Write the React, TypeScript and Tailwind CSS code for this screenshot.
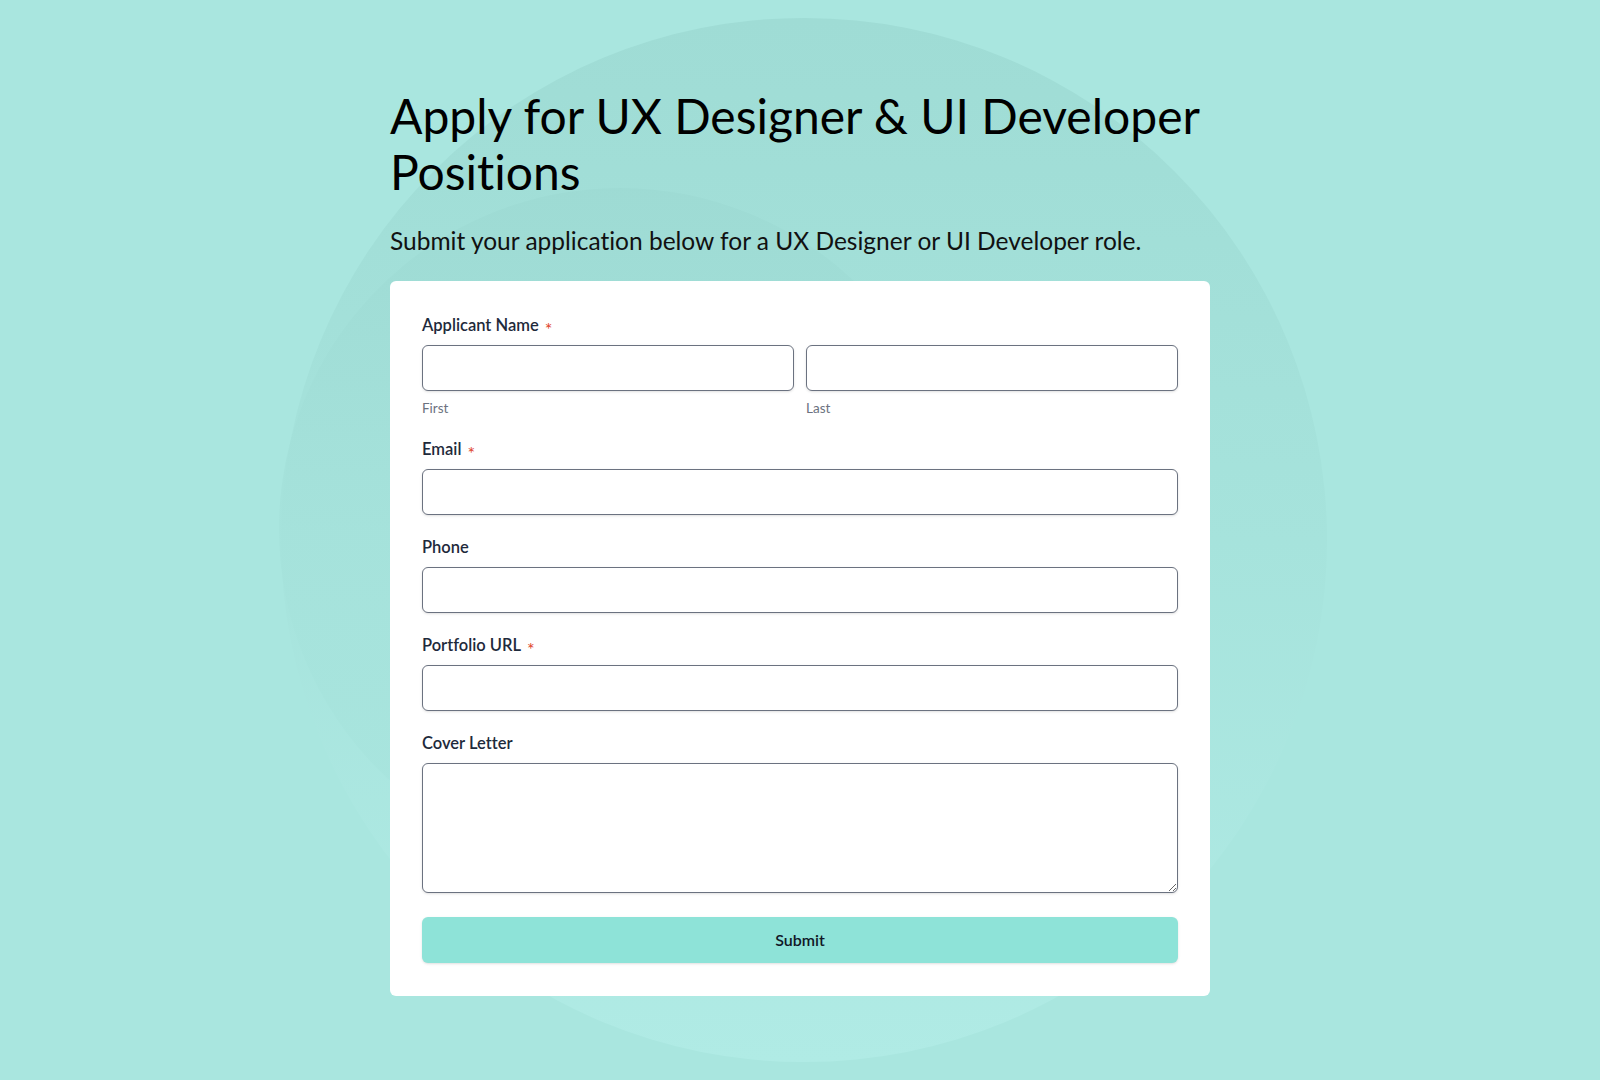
import React from "react";

interface FieldProps {
  label: string;
  required?: boolean;
  children: React.ReactNode;
}

const Field = ({ label, required, children }: FieldProps) => {
  return (
    <div className="flex flex-col">
      <label className="mb-2 flex items-center text-[16.5px] leading-6 font-semibold text-[#1e2a3b]">
        {label}
        {required && (
          <span className="ml-[6px] translate-y-[4px] text-[18px] leading-none font-normal text-[#e0442b]">*</span>
        )}
      </label>
      {children}
    </div>
  );
};

const inputClass =
  "h-[46px] w-full rounded-md border border-[#6b7280] bg-white px-3 text-[16px] shadow-sm outline-none";

export default function App() {
  return (
    <div
      className="relative min-h-screen overflow-hidden bg-[#a9e6df] [font-variant-ligatures:none]"
      style={{ fontFamily: "Lato, 'Open Sans', sans-serif" }}
    >
      {/* Background elements */}
      <div className="absolute left-[281px] top-[18px] h-[1044px] w-[1046px] rounded-full bg-gradient-to-b from-[#9fdcd5] via-[#a6e3dc] to-[#b0ebe5]" />
      <div className="absolute left-[279px] top-[188px] h-[682px] w-[682px] rounded-full bg-gradient-to-b from-[#9ddad3] via-[#a5e2db] to-[#a8e5de] opacity-80" />

      <div className="relative mx-auto w-[820px] pt-[88px] pb-[85px]">
        <h1 className="text-[48px] leading-[56px] font-normal text-black">
          Apply for UX Designer &amp; UI Developer Positions
        </h1>
        <p className="mt-[25px] mb-6 text-[24.5px] leading-8 text-[#111]">
          Submit your application below for a UX Designer or UI Developer role.
        </p>

        <form className="flex flex-col gap-5 rounded-md bg-white px-8 pt-8 pb-[33px]">
          <Field label="Applicant Name" required>
            <div className="grid grid-cols-2 gap-3">
              <div className="flex flex-col">
                <input className={inputClass} />
                <span className="mt-2 text-[13.5px] leading-[18px] text-[#6b7280]">First</span>
              </div>
              <div className="flex flex-col">
                <input className={inputClass} />
                <span className="mt-2 text-[13.5px] leading-[18px] text-[#6b7280]">Last</span>
              </div>
            </div>
          </Field>
          <Field label="Email" required>
            <input className={inputClass} />
          </Field>
          <Field label="Phone">
            <input className={inputClass} />
          </Field>
          <Field label="Portfolio URL" required>
            <input className={inputClass} />
          </Field>
          <Field label="Cover Letter">
            <textarea className="h-[130px] w-full rounded-md border border-[#6b7280] bg-white px-3 py-2 text-[16px] shadow-sm outline-none" />
          </Field>
          <button
            type="button"
            className="mt-1 h-[46px] w-full rounded-md bg-[#8ee3d8] text-[16px] font-semibold text-[#111827] shadow-sm"
          >
            Submit
          </button>
        </form>
      </div>
    </div>
  );
}
